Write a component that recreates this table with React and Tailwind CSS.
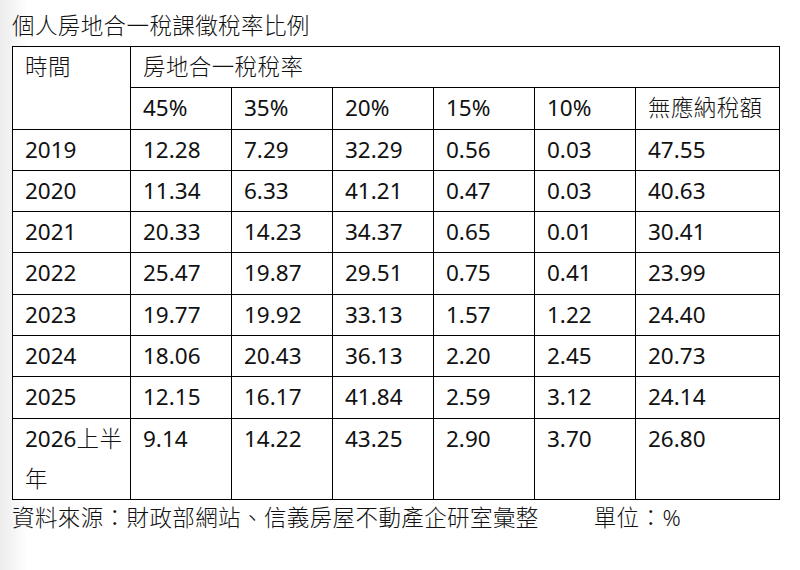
import React from 'react';

const rates = ['45%', '35%', '20%', '15%', '10%'];

const rows = [
  ['2019', '12.28', '7.29', '32.29', '0.56', '0.03', '47.55'],
  ['2020', '11.34', '6.33', '41.21', '0.47', '0.03', '40.63'],
  ['2021', '20.33', '14.23', '34.37', '0.65', '0.01', '30.41'],
  ['2022', '25.47', '19.87', '29.51', '0.75', '0.41', '23.99'],
  ['2023', '19.77', '19.92', '33.13', '1.57', '1.22', '24.40'],
  ['2024', '18.06', '20.43', '36.13', '2.20', '2.45', '20.73'],
  ['2025', '12.15', '16.17', '41.84', '2.59', '3.12', '24.14'],
];

const cell = 'border border-black pl-[12px] pr-1 align-top text-left font-normal leading-[40.3px]';
const cjk = 'font-light tracking-[0.4px]';

const App = () => {
  return (
    <div
      className="w-[800px] h-[570px] overflow-hidden text-[#111] bg-[linear-gradient(to_right,#ececec,#ffffff_28px)]"
      style={{ fontFamily: '"Noto Sans", "Noto Sans CJK TC", sans-serif' }}
    >
      <div className="pl-[12px] pt-[10px]">
        <h1 className={'text-[22.5px] leading-[32px] ' + cjk}>個人房地合一稅課徵稅率比例</h1>

        <table className="mt-[4px] border-collapse bg-white text-[22.5px] table-fixed w-[767px]">
          <colgroup>
            <col className="w-[118px]" />
            <col className="w-[101px]" />
            <col className="w-[101px]" />
            <col className="w-[101px]" />
            <col className="w-[101px]" />
            <col className="w-[101px]" />
            <col className="w-[144px]" />
          </colgroup>
          <thead>
            <tr>
              <th rowSpan={2} className={cell + ' pl-[11px]'}><span className={cjk}>時間</span></th>
              <th colSpan={6} className={cell}><span className={cjk}>房地合一稅稅率</span></th>
            </tr>
            <tr>
              {rates.map((r) => (
                <th key={r} className={cell}>{r}</th>
              ))}
              <th className={cell}><span className={cjk}>無應納稅額</span></th>
            </tr>
          </thead>
          <tbody>
            {rows.map((row) => (
              <tr key={row[0]}>
                {row.map((v, i) => (
                  <td key={i} className={cell + (i === 0 ? ' pl-[11px]' : '')}>{v}</td>
                ))}
              </tr>
            ))}
            <tr>
              <td className={cell + ' pl-[11px]'}>2026<span className={cjk}>上半</span><br /><span className={cjk}>年</span></td>
              <td className={cell}>9.14</td>
              <td className={cell}>14.22</td>
              <td className={cell}>43.25</td>
              <td className={cell}>2.90</td>
              <td className={cell}>3.70</td>
              <td className={cell}>26.80</td>
            </tr>
          </tbody>
        </table>

        <div className={'flex text-[22.5px] leading-[36px] ' + cjk}>
          <span>資料來源：財政部網站、信義房屋不動產企研室彙整</span>
          <span className="ml-[55px]">單位：%</span>
        </div>
      </div>
    </div>
  );
};

export default App;
